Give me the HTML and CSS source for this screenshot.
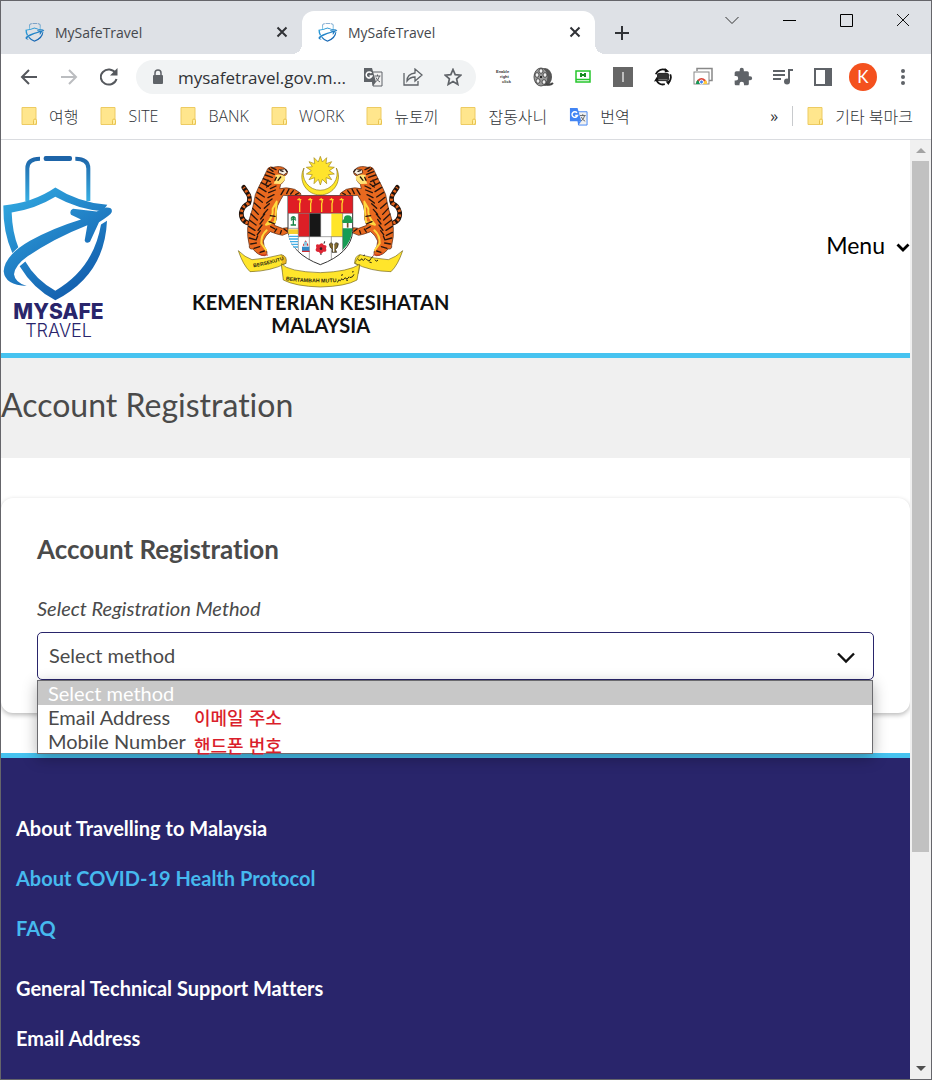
FILE: index.html
```html
<!DOCTYPE html>
<html lang="en">
<head>
  <meta charset="UTF-8" />
  <meta name="viewport" content="width=device-width, initial-scale=1.0" />
  <title>MySafeTravel</title>
  <link rel="stylesheet" href="styles.css">
</head>
<body>
  <svg class="defs" aria-hidden="true">
    <defs>
      <linearGradient id="blue" x1="0" y1="100" x2="230" y2="440" gradientUnits="userSpaceOnUse">
        <stop offset="0" stop-color="#35b4e8" />
        <stop offset="0.5" stop-color="#2488cb" />
        <stop offset="1" stop-color="#135fae" />
      </linearGradient>
      <linearGradient id="handle" x1="0" y1="35" x2="0" y2="170" gradientUnits="userSpaceOnUse">
        <stop offset="0" stop-color="#1d64a8" />
        <stop offset="1" stop-color="#38b0e4" />
      </linearGradient>
      <symbol id="shield" viewBox="3 0 345 470" preserveAspectRatio="none">
        <path d="M82 168V70q0-29 38-29M226 41q39 0 39 29v98" fill="none" stroke="url(#handle)" stroke-width="12" />
        <rect x="131" y="33" width="85" height="15" rx="6" fill="#1d64a8" />
        <path d="M10 181Q100 172 166 127Q235 172 322 179L308 198Q235 193 166 155Q105 192 35 202Q37 262 55 306L37 323Q9 262 10 181Z" fill="url(#blue)" />
        <path d="M303 238L321 227Q314 390 166 465Q100 431 59 363L76 349Q108 405 166 436Q280 370 303 238Z" fill="url(#blue)" />
        <path d="M80 422Q15 420 11 378Q14 330 90 287Q155 250 243 223L213 209Q207 196 219 191L290 199L318 187Q339 186 335 201Q332 209 297 231L270 290Q257 297 254 286L262 240Q160 280 82 334Q45 360 42 387Q45 412 80 422Z" fill="url(#blue)" />
      </symbol>
      <symbol id="folder" viewBox="0 0 16 18">
        <path d="M1 .5h14v12.500l.5 1v3.500H1Z" fill="#ffe68d" stroke="#edcb62" />
        <path d="M12.500 17.500v-4q0-1.500 1.500-1.500t1.500 1.500v2.500q0 1.500-2 1.500" fill="#fff0a8" stroke="#e9c24f" />
      </symbol>
      <symbol id="translate" viewBox="0 0 20 20">
        <path d="M9 5h10v14H10z" fill="#f1f1f1" stroke="currentColor" />
        <path d="M1 1h8l4 14H1z" fill="currentColor" />
        <path d="M8.500 6A3 3 0 1 0 9 9H6.500" fill="none" stroke="#fff" stroke-width="1.500" />
        <path d="M11.500 9h6M14.500 7.500V9M16.500 9q-1 4-4 6M13 10.500q1 3 4 4.500" fill="none" stroke="#5f6368" />
        <path d="M9 15h4l-3 4z" fill="currentColor" />
      </symbol>
      <symbol id="close" viewBox="0 0 12 12">
        <path d="M1.500 1.500l9 9M10.500 1.500l-9 9" stroke="#303236" stroke-width="2" />
      </symbol>
      <g id="tiger" stroke-linejoin="round" stroke-linecap="round">
        <path d="M58 226Q22 220 25 190Q29 170 47 163Q54 145 42 130L32 115" fill="none" stroke="#21130c" stroke-width="14" />
        <path d="M58 226Q22 220 25 190Q29 170 47 163Q54 145 42 130L32 115" fill="none" stroke="#e5641e" stroke-width="9" stroke-dasharray="7 7" stroke-linecap="butt" />
        <path d="M105 58Q112 51 121 55Q142 49 155 58L163 67Q164 79 152 81Q160 94 143 106L140 119Q160 113 185 121L202 132Q207 141 197 142L151 139L143 152Q132 169 130 188Q133 211 124 229L148 238L164 236Q172 245 165 252L148 259Q132 256 112 248Q97 259 91 276Q91 292 100 304Q106 316 95 320Q76 321 60 300Q47 302 49 289Q42 263 44 236Q49 206 58 181Q63 160 67 137Q78 110 87 95Z" fill="#e9691f" stroke="#4b210e" stroke-width="2" />
        <path d="M127 78Q143 74 156 82Q160 94 143 105L122 104Q130 90 127 78Z" fill="#ffe476" />
        <path d="M99 227Q122 204 119 179L131 158L126 219ZM101 244Q84 259 85 283L99 303" fill="none" stroke="#ffd83f" stroke-width="6" />
        <path d="M139 62L157 60L163 70L152 78L137 72Z" fill="#f5eee1" stroke="#24150d" stroke-width="2" />
        <path d="M143 65l7 2M158 62l4 5M108 59l12 8M116 56l13 6M103 68l21 8M97 78l21 7M91 89l21 9M85 101l21 11M79 115l20 13M73 130l21 14M69 145l19 15M64 162l18 16M59 178l17 18M54 195l19 18M49 213l20 15M47 232l19 12M47 250l18 9M49 267l17 5M53 285l17-3M63 298l17-5M129 111l-17 8M127 123l-20 8M123 137l-18 9M117 150l-16 12M109 164l-15 14M104 181l-13 15M95 195l-12 15M91 211l-10 14M87 228l-12 16M82 245l-9 12M74 261l-5 12M112 200l14 2M108 218l15 6M113 233l13 7M131 240l-6 9M145 245l-3 9M153 122l-9 15M168 120l-7 14M181 125l-8 10M188 137l9-5M153 240l9 7M81 310l13-4M143 84l-8 10M130 85l-4 9M105 93l-7 14M114 105l-13 9" stroke="#27150e" stroke-width="4" fill="none" />
        <path d="M104 318h-20l-6-7" fill="none" stroke="#da331d" stroke-width="3" />
      </g>
    </defs>
  </svg>

  <div class="window">
    <div class="tab-strip">
      <div class="tab">
        <svg class="favicon"><use href="#shield" /></svg>
        <span class="tab-title">MySafeTravel</span>
        <button class="tab-close" aria-label="Close tab"><svg width="12" height="12"><use href="#close" /></svg></button>
      </div>
      <div class="tab tab-active">
        <svg class="favicon"><use href="#shield" /></svg>
        <span class="tab-title">MySafeTravel</span>
        <button class="tab-close" aria-label="Close tab"><svg width="12" height="12"><use href="#close" /></svg></button>
      </div>
      <button class="new-tab" aria-label="New tab">
        <svg width="16" height="16" viewBox="0 0 16 16"><path d="M8 1v14M1 8h14" stroke="#303236" stroke-width="2" /></svg>
      </button>
      <div class="window-controls">
        <button aria-label="Search tabs"><svg width="14" height="14" viewBox="0 0 14 14"><path d="M.5 4L7 10.500L13.500 4" fill="none" stroke="#333" /></svg></button>
        <button aria-label="Minimize"><svg width="14" height="14" viewBox="0 0 14 14"><path d="M1 7.500h13" stroke="#000" /></svg></button>
        <button aria-label="Maximize"><svg width="14" height="14" viewBox="0 0 14 14"><path d="M1.500 1.500h12v12h-12z" fill="none" stroke="#000" /></svg></button>
        <button aria-label="Close"><svg width="14" height="14" viewBox="0 0 14 14"><path d="M1 1l12 12M13 1L1 13" stroke="#111" /></svg></button>
      </div>
    </div>

    <div class="toolbar">
      <button class="tool" aria-label="Back"><svg width="18" height="18" viewBox="0 0 18 18"><path d="M17 9H2M9 2L2 9l7 7" fill="none" stroke="#55585d" stroke-width="2" /></svg></button>
      <button class="tool" aria-label="Forward"><svg width="18" height="18" viewBox="0 0 18 18"><path d="M1 9h15M9 2l7 7-7 7" fill="none" stroke="#bbbdc0" stroke-width="2" /></svg></button>
      <button class="tool" aria-label="Reload"><svg width="18" height="18" viewBox="0 0 18 18"><path d="M15.500 5A8 7.500 0 1 0 16.500 11" fill="none" stroke="#55585d" stroke-width="2" /><path d="M17.500 0v7.500H10z" fill="#55585d" /></svg></button>
      <div class="omnibox">
        <svg width="12" height="16" viewBox="0 0 12 16"><path d="M3 7V4a3 3 0 0 1 6 0v3" fill="none" stroke="#5f6368" stroke-width="1.500" /><rect x="1" y="6" width="10" height="9" rx="1" fill="#5f6368" /></svg>
        <input class="url" type="text" aria-label="Address" value="mysafetravel.gov.m...">
        <button class="page-action" aria-label="Translate this page"><svg width="20" height="20"><use href="#translate" /></svg></button>
        <button class="page-action" aria-label="Share"><svg width="20" height="18" viewBox="0 0 20 18"><path d="M1 5v12h14v-4M4 13q0-7 8-8V1l7 6-7 6V9q-5 0-8 4Z" fill="none" stroke="#5f6368" stroke-width="1.300" /></svg></button>
        <button class="page-action" aria-label="Bookmark this tab"><svg width="18" height="18" viewBox="0 0 18 18"><path d="M9 1.500l2.200 5.200 5.600.5-4.200 3.700 1.200 5.500L9 13.500l-4.800 2.900 1.200-5.500L1.200 7.200l5.600-.5z" fill="none" stroke="#5f6368" stroke-width="1.700" /></svg></button>
      </div>
      <div class="extensions">
        <button class="tool" aria-label="Enable right click">
          <svg width="18" height="18" viewBox="0 0 18 18" font-family="Liberation Sans" font-size="4" font-weight="bold" fill="#333"><text x="2" y="5">Enable</text><text x="6" y="10">right</text><text x="8" y="15">click</text></svg>
        </button>
        <button class="tool" aria-label="Video downloader">
          <svg width="22" height="22" viewBox="0 0 22 22"><ellipse cx="13" cy="11" rx="7" ry="9" fill="#555" /><path d="M14 18q4 2 7-1" stroke="#444" stroke-width="2" fill="none" /><ellipse cx="9" cy="11" rx="7" ry="9" fill="#999" stroke="#555" /><g fill="#f0f0f0" stroke="#333" stroke-width="0.800"><ellipse cx="9" cy="5" rx="2" ry="2.300" /><ellipse cx="5" cy="9" rx="2" ry="2.300" /><ellipse cx="6" cy="15" rx="2" ry="2.300" /><ellipse cx="12" cy="16" rx="2" ry="2.300" /><ellipse cx="13" cy="9" rx="2" ry="2.300" /></g><circle cx="9" cy="11" r="1" /></svg>
        </button>
        <button class="tool" aria-label="Page recorder">
          <svg width="16" height="14" viewBox="0 0 16 14"><path d="M1 1h14v11H1zM1 9.500h14" fill="none" stroke="#26c62c" stroke-width="1.500" /><path d="M6 3v4M10 3v4M6 5h4" stroke="#168d20" stroke-width="2" /></svg>
        </button>
        <button class="tool" aria-label="Image tool">
          <svg width="20" height="20" viewBox="0 0 20 20"><path d="M0 0h20v20H0z" fill="#666" /><path d="M10 5v10" stroke="#ddd" stroke-width="1.500" /></svg>
        </button>
        <button class="tool" aria-label="Sync">
          <svg width="18" height="18" viewBox="0 0 20 20"><path d="M2 7a8 8 0 0 1 12-4M18 7a8 8 0 0 1-2 9M12 18a8 8 0 0 1-9-4" fill="none" stroke="#111" stroke-width="2" /><path d="M12 0l5 4-5 1zM19 14l-3 5-3-4zM0 15l3-5 3 4z" fill="#111" /><rect x="4" y="6" width="12" height="8" rx="1" fill="#333" stroke="#111" /><path d="M5 13h10" stroke="#888" /></svg>
        </button>
        <button class="tool" aria-label="Remote desktop">
          <svg width="20" height="20" viewBox="0 0 20 20"><path d="M4 4V1.500h15v12h-3" fill="none" stroke="#888" stroke-width="1.500" /><rect x="1" y="5" width="15" height="12" fill="#fff" stroke="#888" /><path d="M3 17a5.500 6 0 0 1 11 0z" fill="#db4437" /><path d="M3 17a6 6 0 0 1 1.500-4L8 17z" fill="#0f9d58" /><path d="M8 17h6a6 6 0 0 0-1-4z" fill="#ffcd40" /><circle cx="8.500" cy="15" r="2" fill="#4285f4" stroke="#fff" /></svg>
        </button>
        <button class="tool" aria-label="Extensions">
          <svg width="20" height="20" viewBox="0 0 24 24"><path fill="#5f6368" d="M20.500 11H19V7a2 2 0 0 0-2-2h-4V3.500a2.500 2.500 0 0 0-5 0V5H4a2 2 0 0 0-2 2v3.800h1.500a2.700 2.700 0 0 1 0 5.400H2V20c0 1.100.9 2 2 2h3.800v-1.500a2.700 2.700 0 0 1 5.400 0V22H17a2 2 0 0 0 2-2v-4h1.500a2.500 2.500 0 0 0 0-5z" /></svg>
        </button>
        <button class="tool" aria-label="Media controls">
          <svg width="20" height="16" viewBox="0 0 20 16"><path d="M0 2h12M0 6h12M0 10h8M16 12V1h4" fill="none" stroke="#5f6368" stroke-width="2" /><circle cx="14" cy="12.500" r="3" fill="#5f6368" /></svg>
        </button>
        <button class="tool" aria-label="Side panel">
          <svg width="18" height="18" viewBox="0 0 18 18"><path d="M1 1h16v16H1z" fill="#fff" stroke="#5f6368" stroke-width="2" /><path d="M11 0h7v18h-7z" fill="#5f6368" /></svg>
        </button>
        <button class="tool" aria-label="Profile"><span class="avatar">K</span></button>
        <button class="tool" aria-label="Browser menu">
          <svg width="4" height="18" viewBox="0 0 4 18" fill="#5f6368"><circle cx="2" cy="3" r="2" /><circle cx="2" cy="9" r="2" /><circle cx="2" cy="15" r="2" /></svg>
        </button>
      </div>
    </div>

    <nav class="bookmarks" aria-label="Bookmarks">
      <a href="#"><svg width="16" height="18"><use href="#folder" /></svg>여행</a>
      <a href="#"><svg width="16" height="18"><use href="#folder" /></svg>SITE</a>
      <a href="#"><svg width="16" height="18"><use href="#folder" /></svg>BANK</a>
      <a href="#"><svg width="16" height="18"><use href="#folder" /></svg>WORK</a>
      <a href="#"><svg width="16" height="18"><use href="#folder" /></svg>뉴토끼</a>
      <a href="#"><svg width="16" height="18"><use href="#folder" /></svg>잡동사니</a>
      <a href="#"><svg class="google" width="19" height="19"><use href="#translate" /></svg>번역</a>
      <button class="more" aria-label="More bookmarks">»</button>
      <a class="other" href="#"><svg width="16" height="18"><use href="#folder" /></svg>기타 북마크</a>
    </nav>

    <div class="viewport">
      <div class="page">
        <header class="site-header">
          <a class="logo" href="#">
            <svg width="115" height="157"><use href="#shield" /></svg>
            <span class="logo-name">MYSAFE</span>
            <span class="logo-sub">TRAVEL</span>
          </a>
          <div class="ministry">
            <svg width="175" height="142" viewBox="0 0 525 426">
              <use href="#tiger" />
              <use href="#tiger" transform="translate(525 0) scale(-1 1)" />
              <path d="M213 57A55 55 0 1 0 310 57A51 51 0 1 1 213 57Z" fill="#ffe829" stroke="#8f7613" stroke-width="2" />
              <path d="M262 22L268 39L281 26L279 44L296 38L286 53L304 55L289 65L304 75L286 77L296 92L279 86L281 104L268 91L262 108L256 91L243 104L245 86L228 92L238 77L220 75L235 65L220 55L238 53L228 38L245 44L243 26L256 39Z" fill="#ffe42c" stroke="#a18618" stroke-width="2" />
              <path d="M165 140H359V248Q353 313 262 347Q174 314 165 248Z" fill="#fff" stroke="#333" stroke-width="3" />
              <path d="M165 140h194v53H165z" fill="#df1e25" />
              <path d="M196 193h33v70h-33z" fill="#dc1f26" />
              <path d="M229 193h34v70h-34z" fill="#171717" />
              <path d="M295 193h34v70h-34z" fill="#ffe528" />
              <path d="M329 238h29q-1 40-29 65z" fill="#169d55" />
              <path d="M166 241h30v14h-30z" fill="#f6ce2d" />
              <path d="M166 257h30v48q-24-17-30-48z" fill="#fff" />
              <path d="M168 262h27M168 270h27M171 278h24M175 286h20M181 294h14" stroke="#43aee5" stroke-width="4" />
              <path d="M166 193h192M196 193v112M229 263v70M263 193v70M295 263v70M329 193v112M196 263h133M166 238h30" fill="none" stroke="#555" stroke-width="1.500" />
              <g fill="none" stroke="#ffd52a" stroke-width="4"><path d="M197 148q8 6 3 16v25M230 148q8 6 3 16v25M263 148q8 6 3 16v25M294 148q8 6 3 16v25M324 148q8 6 3 16v25" /><path d="M193 152h12M226 152h12M259 152h12M290 152h12M320 152h12" /></g>
              <path d="M181 226v-21M174 209q7-12 14 0M174 214q7-9 15 0M173 228h16" fill="none" stroke="#178245" stroke-width="4" />
              <path d="M344 236v-27" stroke="#76512a" stroke-width="5" />
              <path d="M329 222q-4-8 4-11-1-12 11-12 14 1 12 12 7 5 1 11z" fill="#1d9a4d" />
              <path d="M207 293h22v14h-22z" fill="#328bc8" /><path d="M207 307h23M211 290l7-12 7 12" stroke="#cf3036" stroke-width="4" fill="none" /><path d="M213 278h9v12h-9z" fill="#8fc6df" />
              <path d="M264 318l-3-31M273 284l2-7" stroke="#222" stroke-width="3" /><path d="M250 296q-4-13 9-9 9-9 13 1 12 0 7 10 4 13-8 10-8 12-13 1-15-1-8-13z" fill="#dc2634" /><circle cx="264" cy="299" r="4" fill="#361c20" />
              <path d="M289 285q8-9 13 6 5-15 14-7-1 14-9 17l4 9h-14l1-10q-8-3-9-15z" fill="#81692e" stroke="#222" stroke-width="2" /><path d="M302 286v22" stroke="#fff" stroke-width="4" />
              <path d="M16 305Q36 325 57 332Q100 329 145 317L159 343Q113 367 51 368Q30 348 16 305Z" fill="#ffe52b" stroke="#72631c" stroke-width="2" />
              <path d="M145 317Q164 321 159 343L146 347L149 368" fill="#eeb821" stroke="#72631c" stroke-width="2" />
              <path d="M509 305Q488 325 466 332Q423 329 381 317L365 343Q412 367 474 368Q495 348 509 305ZM381 317Q365 321 365 343L380 350L376 374" fill="#ffe52b" stroke="#72631c" stroke-width="2" />
              <path d="M145 344Q165 368 262 371Q347 368 380 346L372 393Q339 412 262 414Q187 412 151 393Z" fill="#ffe52b" stroke="#72631c" stroke-width="2" />
              <path id="motto-left" d="M62 355Q108 347 170 327" fill="none" />
              <path id="motto-main" d="M158 394Q240 404 330 398" fill="none" />
              <g font-family="Liberation Sans" font-weight="bold" fill="#292514"><text font-size="15"><textPath href="#motto-left">BERSEKUTU</textPath></text><text font-size="16"><textPath href="#motto-main">BERTAMBAH MUTU</textPath></text></g>
              <path d="M374 330q7 9 12-1 5 11 11-2M400 330q9 12 13-1l8-8M426 332q4 9 9 1M391 320l5-2M409 339l7 2M312 400q5-2 6-8 4 8 8-3 4 8 10-3 7 8 12-3M350 386q10 0 13-10M324 379l6-2M339 393l6 1M357 369l5-1" fill="none" stroke="#2b2615" stroke-width="3" />
            </svg>
            <p>KEMENTERIAN KESIHATAN<br>MALAYSIA</p>
          </div>
          <button class="menu">Menu
            <svg width="14" height="10" viewBox="0 0 14 10"><path d="M1.500 1.500L7 7l5.500-5.500" fill="none" stroke="#000" stroke-width="2.800" /></svg>
          </button>
        </header>

        <h1 class="banner">Account Registration</h1>

        <main>
          <section class="card">
            <h2>Account Registration</h2>
            <label for="method">Select Registration Method</label>
            <div class="select-wrap">
              <select id="method">
                <option>Select method</option>
                <option>Email Address</option>
                <option>Mobile Number</option>
              </select>
              <svg class="caret" width="18" height="12" viewBox="0 0 18 12"><path d="M1 1.500L9 9.500l8-8" fill="none" stroke="#111" stroke-width="2.400" /></svg>
              <div class="dropdown">
                <ul role="listbox" aria-label="Registration method">
                  <li role="option" aria-selected="true" class="selected">Select method</li>
                  <li role="option">Email Address</li>
                  <li role="option">Mobile Number</li>
                </ul>
                <div class="notes" lang="ko">
                  <span>이메일 주소</span>
                  <span>핸드폰 번호</span>
                </div>
              </div>
            </div>
          </section>
        </main>

        <footer class="site-footer">
          <h3>About Travelling to Malaysia</h3>
          <a href="#">About COVID-19 Health Protocol</a>
          <a href="#">FAQ</a>
          <h3 class="support">General Technical Support Matters</h3>
          <h3>Email Address</h3>
        </footer>
      </div>

      <div class="scrollbar">
        <button aria-label="Scroll up"><svg width="10" height="6" viewBox="0 0 10 6"><path d="M5 0l5 5H0z" fill="#a3a3a3" /></svg></button>
        <div class="track"><div class="thumb"></div></div>
        <button aria-label="Scroll down"><svg width="10" height="6" viewBox="0 0 10 6"><path d="M0 0h10L5 5z" fill="#505050" /></svg></button>
      </div>
    </div>
  </div>
</body>
</html>
```
FILE: styles.css
```css
* {
  box-sizing: border-box;
}

body {
  margin: 0;
  font-family: Lato, "Noto Sans CJK KR", sans-serif;
  font-variant-ligatures: none;
  color: #4a4a4a;
}

button {
  border: none;
  background: none;
  padding: 0;
  margin: 0;
  font: inherit;
  color: inherit;
  display: flex;
  align-items: center;
  justify-content: center;
}

a {
  text-decoration: none;
}

svg {
  flex-shrink: 0;
}

.defs {
  position: absolute;
  width: 0;
  height: 0;
}

.window {
  height: 100vh;
  display: flex;
  flex-direction: column;
  border: 1px solid #65656a;
  background: #fff;
  overflow: hidden;
}

/* tabs */
.tab-strip {
  display: flex;
  flex-shrink: 0;
  height: 53px;
  padding: 10px 0 0 8px;
  background: #dee1e6;
  font: 14px "Open Sans", sans-serif;
  color: #45484d;
}

.tab {
  position: relative;
  display: flex;
  align-items: center;
  flex: 0 1 293px;
  gap: 10px;
  padding: 0 14px 1px 16px;
}

.tab-active {
  background: #fff;
  border-radius: 12px 12px 0 0;
}

.tab-active::before,
.tab-active::after {
  content: "";
  position: absolute;
  bottom: 0;
  width: 10px;
  height: 10px;
}

.tab-active::before {
  right: 100%;
  background: radial-gradient(circle at 0 0, transparent 10px, #fff 10px);
}

.tab-active::after {
  left: 100%;
  background: radial-gradient(circle at 100% 0, transparent 10px, #fff 10px);
}

.favicon {
  width: 20px;
  height: 20px;
}

.tab-title {
  flex: 1;
}

.new-tab {
  width: 53px;
}

.window-controls {
  display: flex;
  height: 18px;
  margin-left: auto;
}

.window-controls button {
  width: 57px;
}

/* toolbar */
.toolbar {
  display: flex;
  align-items: center;
  flex-shrink: 0;
  height: 46px;
  padding: 0 8px;
}

.tool {
  width: 40px;
  height: 40px;
}

.omnibox {
  display: flex;
  align-items: center;
  flex: 1;
  min-width: 0;
  height: 34px;
  margin: 0 7px;
  padding: 0 3px 0 16px;
  border-radius: 17px;
  background: #f1f3f4;
}

.url {
  flex: 1;
  min-width: 0;
  margin-left: 14px;
  padding: 0;
  border: none;
  background: none;
  font: 17px "Open Sans", sans-serif;
  color: #303236;
}

.page-action {
  width: 40px;
  color: #5f6368;
}

.extensions {
  display: flex;
}

.avatar {
  width: 28px;
  line-height: 28px;
  border-radius: 50%;
  background: #f4511e;
  color: #fff;
  font-size: 17px;
  text-align: center;
}

/* bookmarks */
.bookmarks {
  display: flex;
  align-items: center;
  gap: 22px;
  flex-shrink: 0;
  height: 40px;
  padding: 0 18px 7px 20px;
  border-bottom: 1px solid #dadce0;
  font: 300 16px "Open Sans", "Noto Sans CJK KR", sans-serif;
  color: #303338;
  white-space: nowrap;
}

.bookmarks a {
  display: flex;
  align-items: center;
  gap: 12px;
  height: 20px;
  color: inherit;
}

.bookmarks .google {
  color: #4285f4;
}

.more {
  margin-left: auto;
  font-weight: 400;
}

.bookmarks .other {
  padding-left: 14px;
  margin-left: -8px;
  border-left: 1px solid #c8cacd;
}

/* web page */
.viewport {
  display: flex;
  flex: 1;
  min-height: 0;
}

.page {
  display: flex;
  flex-direction: column;
  flex: 1;
  min-width: 0;
  overflow: hidden;
}

.page > * {
  flex-shrink: 0;
}

.site-header {
  display: flex;
  align-items: center;
  padding: 5px 0 13px;
  border-bottom: 5px solid #46c3f0;
}

.logo {
  display: flex;
  flex-direction: column;
  align-items: center;
  color: #29256b;
}

.logo-name {
  font: 800 21px/20px Inter, sans-serif;
}

.logo-sub {
  font: 300 18px/18px Inter, sans-serif;
}

.ministry {
  margin-left: 76px;
  text-align: center;
}

.ministry svg {
  display: block;
  margin: 0 auto;
}

.ministry p {
  margin: 0;
  font-size: 20px;
  font-weight: 700;
  line-height: 23px;
  color: #111;
}

.menu {
  gap: 11px;
  margin-left: auto;
  padding-top: 5px;
  font-size: 23px;
  color: #000;
}

.menu svg {
  margin-top: 6px;
}

.banner {
  margin: 0;
  padding: 27px 0 33px;
  background: #f0f0f0;
  font-size: 32px;
  line-height: 40px;
  font-weight: 400;
}

main {
  padding: 40px 0;
}

.card {
  padding: 36px 36px 33px;
  border-radius: 12px;
  background: #fff;
  box-shadow: 0 2px 5px rgba(0, 0, 0, 0.28);
}

.card h2 {
  margin: 0 0 30px;
  font-size: 26px;
  line-height: 30px;
}

.card label {
  display: block;
  margin-bottom: 10px;
  font-size: 20px;
  line-height: 28px;
  font-style: italic;
}

.select-wrap {
  position: relative;
}

select {
  display: block;
  width: 100%;
  height: 48px;
  padding: 0 11px 2px;
  border: 1px solid #29256b;
  border-radius: 5px;
  appearance: none;
  background: #fff;
  font: 20px Lato, sans-serif;
  color: #4a4a4a;
}

.caret {
  position: absolute;
  top: 20px;
  right: 19px;
}

.dropdown {
  position: absolute;
  top: 100%;
  left: 0;
  right: 1px;
  border: 1px solid #6b6b6f;
  background: #fff;
  box-shadow: 0 4px 14px rgba(0, 0, 0, 0.3);
  z-index: 1;
}

.dropdown ul {
  margin: 0;
  padding: 0;
  list-style: none;
}

.dropdown li {
  padding: 0 10px;
  font-size: 20px;
  line-height: 24px;
}

.dropdown .selected {
  background: #c8c8c8;
  color: #fff;
}

/* Korean hints over the open list */
.notes {
  position: absolute;
  top: 22px;
  left: 156px;
  display: flex;
  flex-direction: column;
  font: 500 18px/28px "Noto Sans CJK KR", sans-serif;
  color: #da1f2c;
}

.site-footer {
  display: flex;
  flex-direction: column;
  align-items: flex-start;
  gap: 20px;
  min-height: 400px;
  padding: 55px 15px;
  border-top: 5px solid #46c3f0;
  background: #29256b;
  font-size: 20px;
  font-weight: 700;
  line-height: 30px;
  color: #fff;
}

.site-footer h3 {
  margin: 0;
  font-size: inherit;
}

.site-footer .support {
  margin-top: 10px;
}

.site-footer a {
  color: #46b9ee;
}

/* scrollbar */
.scrollbar {
  display: flex;
  flex-direction: column;
  width: 21px;
  background: #f0f0f0;
}

.scrollbar button {
  height: 21px;
}

.track {
  flex: 1;
  padding: 0 2px;
}

.thumb {
  height: 77%;
  background: #c1c1c1;
}
```
